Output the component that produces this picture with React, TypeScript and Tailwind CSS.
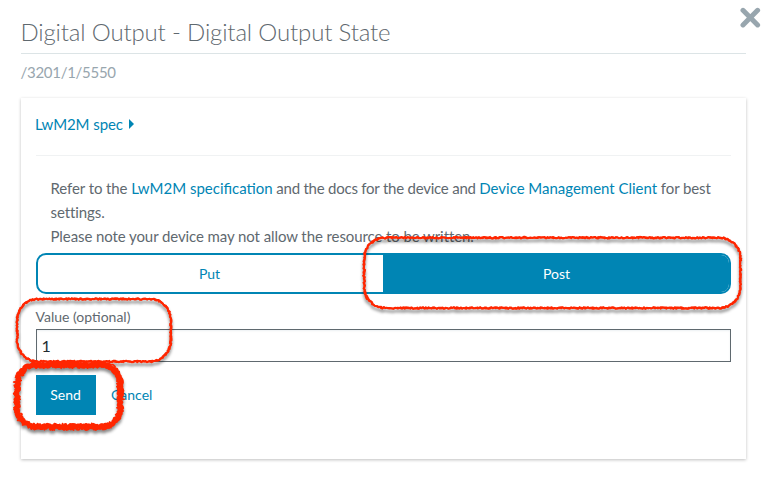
import React from "react";

// Traces a rounded rectangle as a crayon-like line: short steps, each pushed
// off the outline by a small repeatable amount.
function crayonPath(x: number, y: number, w: number, h: number, r: number, jitter: number, seed: number) {
  let state = seed;
  const random = () => {
    state = (state * 16807) % 2147483647;
    return state / 2147483647 - 0.5;
  };
  const points: string[] = [];
  const add = (px: number, py: number, nx: number, ny: number) => {
    const d = random() * 2 * jitter;
    points.push(`${(px + nx * d).toFixed(2)} ${(py + ny * d).toFixed(2)}`);
  };
  const step = 1.4;
  const line = (x1: number, y1: number, x2: number, y2: number, nx: number, ny: number) => {
    const n = Math.round(Math.hypot(x2 - x1, y2 - y1) / step);
    for (let i = 0; i < n; i++) add(x1 + ((x2 - x1) * i) / n, y1 + ((y2 - y1) * i) / n, nx, ny);
  };
  const arc = (cx: number, cy: number, from: number) => {
    const n = Math.round((r * Math.PI) / 2 / step);
    for (let i = 0; i < n; i++) {
      const a = from + (Math.PI / 2) * (i / n);
      add(cx + r * Math.cos(a), cy + r * Math.sin(a), Math.cos(a), Math.sin(a));
    }
  };
  line(x + r, y, x + w - r, y, 0, -1);
  arc(x + w - r, y + r, -Math.PI / 2);
  line(x + w, y + r, x + w, y + h - r, 1, 0);
  arc(x + w - r, y + h - r, 0);
  line(x + w - r, y + h, x + r, y + h, 0, 1);
  arc(x + r, y + h - r, Math.PI / 2);
  line(x, y + h - r, x, y + r, -1, 0);
  arc(x + r, y + r, Math.PI);
  return `M${points.join("L")}Z`;
}

function Annotations() {
  return (
    <svg
      className="pointer-events-none absolute inset-0 drop-shadow-[0_3px_1.6px_rgba(0,0,0,0.45)]"
      width="765"
      height="500"
      viewBox="0 0 765 500"
      fill="none"
      stroke="#ff2600"
      strokeLinejoin="round"
    >
      <g strokeWidth="1.9">
        <path d={crayonPath(364.2, 237.7, 376.3, 70.3, 21, 0.8, 1101)} />
        <path d={crayonPath(364.2, 237.7, 376.3, 70.3, 21, 0.9, 9704)} />
        <path d={crayonPath(17.2, 299, 153.6, 62.5, 21, 0.8, 2309)} />
        <path d={crayonPath(17.2, 299, 153.6, 62.5, 21, 0.9, 5903)} />
      </g>
      <path d={crayonPath(17.2, 364.8, 103.2, 62, 19, 1.3, 3107)} strokeWidth="5" />
      <path d={crayonPath(17.2, 364.8, 103.2, 62, 19, 3.7, 7102)} strokeWidth="1.6" />
      <path d={crayonPath(17.2, 364.8, 103.2, 62, 19, 3.4, 4306)} strokeWidth="1.6" />
    </svg>
  );
}

export default function App() {
  return (
    <div className="relative h-[500px] w-[765px] overflow-hidden bg-white pl-[21px] pr-[19px] font-['Lato',sans-serif] text-[15px] leading-6 text-[#5f696f]">
      <button aria-label="Close" className="absolute left-[740px] top-[7px]">
        <svg width="21" height="21" viewBox="0 0 21 21" fill="none" stroke="#98a6ae" strokeWidth="5" strokeLinecap="round">
          <path d="M3 3.3 17.6 17.9M17.6 3.3 3 17.9" />
        </svg>
      </button>
      <h1 className="h-[54px] border-b border-[#dce4e6] pt-[14px] indent-[-0.5px] text-[24px] font-light leading-[36px] tracking-[-0.16px]">
        Digital Output - Digital Output State
      </h1>
      <p className="mt-[6px] indent-[-0.5px] tracking-[-0.28px] text-[#98a6ae]">/3201/1/5550</p>
      <main className="mt-[14px] h-[361px] bg-white px-[15px] pt-[14px] shadow-[0_1px_3px_rgba(0,0,0,0.25)]">
        <a className="flex h-[44px] items-start gap-[6px] border-b border-[#f0f2f3] text-[#0085b4]">
          <span className="-ml-px tracking-[-0.08px]">LwM2M spec</span>
          <svg className="mt-[7px]" width="5" height="10" viewBox="0 0 5 10" fill="currentColor">
            <path d="M0 0 5 5 0 10Z" />
          </svg>
        </a>
        <p className="-mr-2 mt-5 pl-[14.5px] tracking-[-0.09px]">
          Refer to the <a className="tracking-normal text-[#0085b4]">LwM2M specification</a>
          <span className="tracking-[-0.23px]"> and the docs for the device and </span>
          <a className="tracking-[-0.02px] text-[#0085b4]">Device Management Client</a> for best
          <br />
          settings.
          <br />
          Please note your device may not allow the resource to be written.
        </p>
        <div className="mt-[5px] flex h-[41px] overflow-hidden rounded-[10px] border-2 border-[#0085b4] text-[14px]">
          <button className="w-[345px] pr-[2px] text-[#0085b4]">Put</button>
          <button className="flex-1 bg-[#0085b4] pl-px text-white">Post</button>
        </div>
        <label className="mt-[11px] block indent-[-0.5px] text-[14px]">Value (optional)</label>
        <input
          className="block h-[33px] w-full border border-[#5f696f] pl-[4.5px] text-[16px] text-[#222b30] shadow-[inset_0_1px_2px_rgba(0,60,90,0.08)] outline-none"
          defaultValue="1"
        />
        <div className="mt-[13px] flex h-10 items-center gap-[15px] text-[14px]">
          <button className="h-10 w-[60px] bg-[#0085b4] pr-px text-white">Send</button>
          <button className="text-[#0085b4]">Cancel</button>
        </div>
      </main>
      <Annotations />
    </div>
  );
}
